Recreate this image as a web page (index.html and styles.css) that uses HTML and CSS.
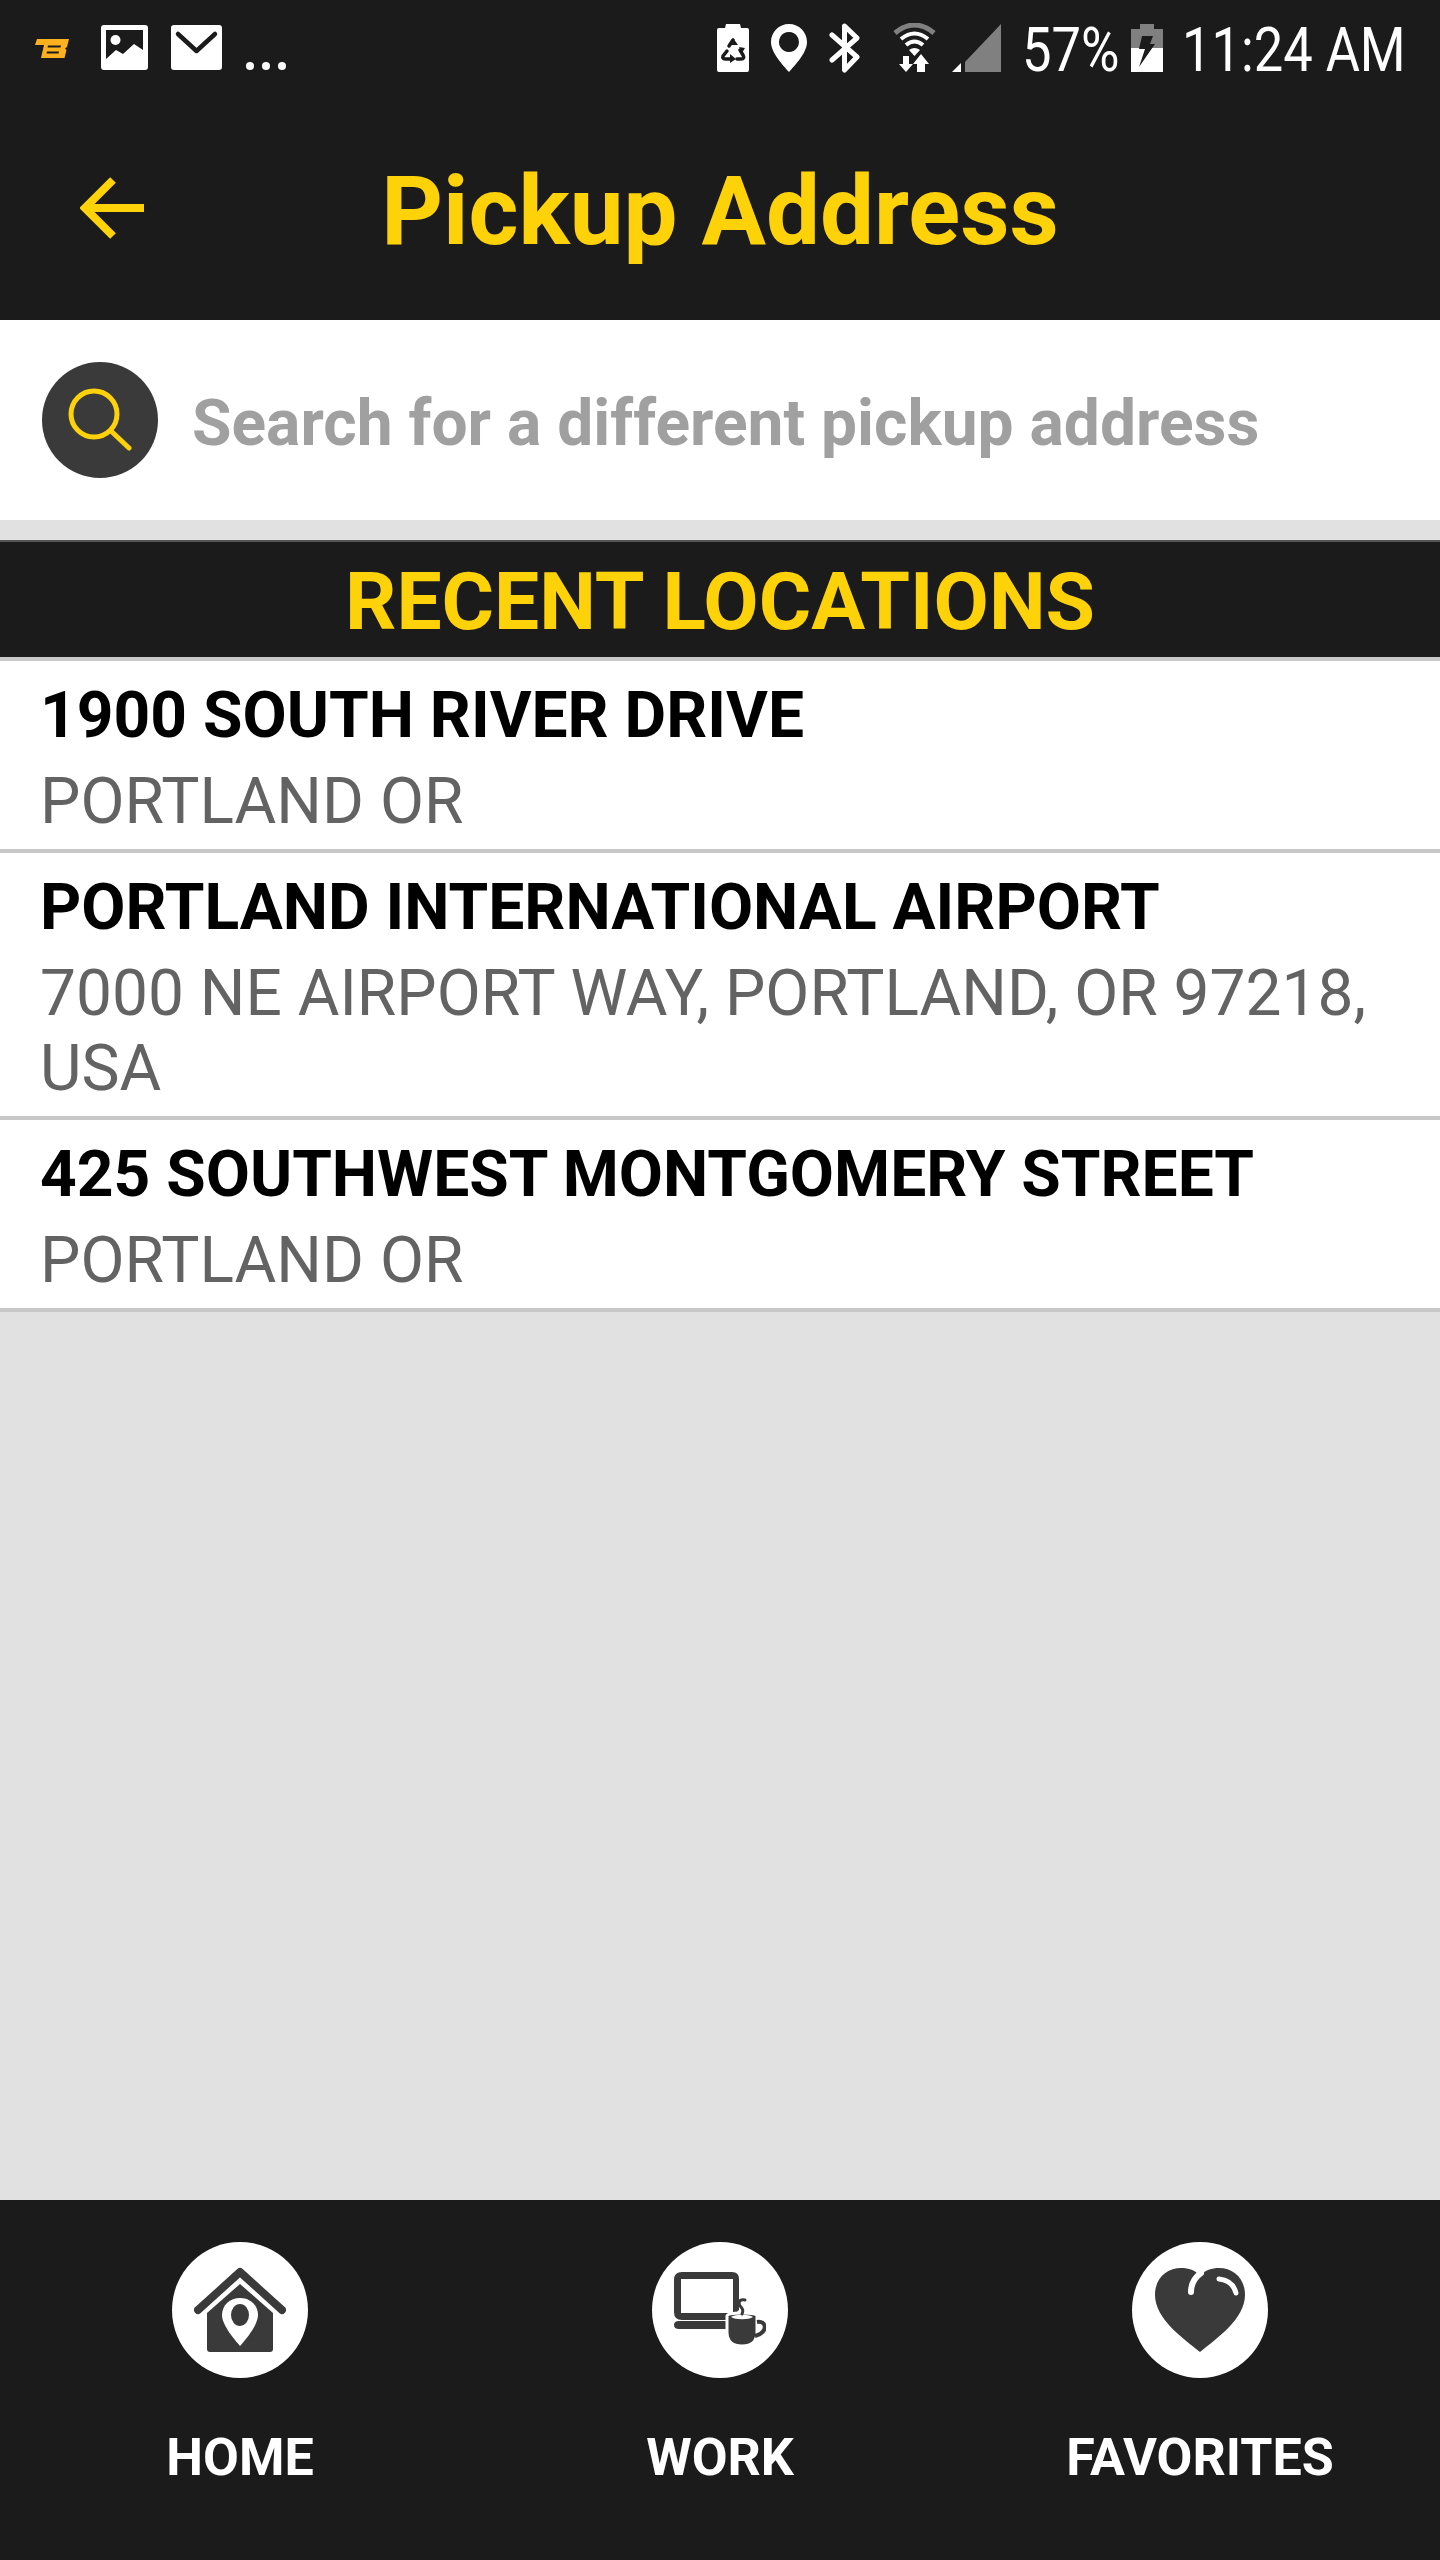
FILE: index.html
```html
<!DOCTYPE html>
<html lang="en">

<head>
    <meta charset="UTF-8">
    <meta name="viewport" content="width=device-width, initial-scale=1.0">
    <title>Pickup Address</title>
    <link rel="stylesheet" href="styles.css">
</head>

<body>
    <div class="app">
        <div class="status-bar">
            <div class="status-left">
                <svg class="ic-brand" viewBox="0 0 34 19">
                    <path d="M2 0H34L32 8L30 9.500L31.500 11L29.500 19H6L9 6H0Z" fill="#fbb01f" />
                    <path d="M13 6.500H26L25.500 8.500H12.500ZM12 12.500H24L23.500 14.500H11.500Z" fill="#1b1b1b" />
                </svg>
                <svg class="ic-picture" viewBox="0 0 47 45">
                    <rect width="47" height="45" rx="3" fill="#fff" />
                    <path d="M5 5H42V25L33 19L22 29L15 25L5 34Z" fill="#1b1b1b" />
                    <circle cx="14.500" cy="15" r="5" fill="#fff" />
                </svg>
                <svg class="ic-mail" viewBox="0 0 51 45">
                    <rect width="51" height="45" rx="3" fill="#fff" />
                    <path d="M7 9L25.500 26L44 9" fill="none" stroke="#1b1b1b" stroke-width="4.500" stroke-linecap="round" stroke-linejoin="round" />
                </svg>
                <div class="more-dots"><span></span><span></span><span></span></div>
            </div>
            <div class="status-right">
                <svg class="ic-battery-saver" viewBox="0 0 32 48">
                    <path d="M9 0H23L24 4H30Q32 4 32 6V46Q32 48 30 48H2Q0 48 0 46V6Q0 4 2 4H8Z" fill="#fff" />
                    <path d="M16 16L12 22M10 27L6 32Q5 35 9 35H13M20 35H24Q28 35 26 31L23 26" fill="none" stroke="#1b1b1b" stroke-width="3.500" stroke-linecap="round" />
                    <path d="M16 14L11 21H21ZM13 30V39L19 35ZM22 23L28 24L25 29Z" fill="#1b1b1b" />
                </svg>
                <svg class="ic-pin" viewBox="0 0 36 48">
                    <path fill-rule="evenodd" d="M18 0C8 0 0 8 0 18C0 29 12 41 18 48C24 41 36 29 36 18C36 8 28 0 18 0ZM18 8A10 10 0 1 1 17.900 8Z" fill="#fff" />
                </svg>
                <svg class="ic-bluetooth" viewBox="0 0 31 50">
                    <path d="M3 12L28 34L15.500 47V3L28 15L3 37" fill="none" stroke="#fff" stroke-width="5" stroke-linecap="round" stroke-linejoin="round" />
                </svg>
                <svg class="ic-wifi" viewBox="0 0 43 49">
                    <path d="M2 10Q21.500 -6 41 10" fill="none" stroke="#808080" stroke-width="5" />
                    <path d="M8 16Q21.500 5 35 16M13 22Q21.500 15 30 22" fill="none" stroke="#fff" stroke-width="4" />
                    <path d="M16 27Q21.500 23 27 27L21.500 33Z" fill="#fff" />
                    <path d="M10 33H16V41H20L13 49L6 41H10ZM24 49V41H20L28 31L36 41H32V49Z" fill="#fff" />
                </svg>
                <svg class="ic-signal" viewBox="0 0 49 48">
                    <path d="M13 38L49 0V48H13Z" fill="#808080" />
                    <path d="M0 48L9 39V48Z" fill="#fff" />
                </svg>
                <span class="battery-pct"><span class="narrow-text">57%</span></span>
                <svg class="ic-charging" viewBox="0 0 32 48">
                    <path d="M9 0H23V5H32V24H0V5H9Z" fill="#808080" />
                    <path d="M0 24H32V48H0Z" fill="#fff" />
                    <path d="M11 12H22L19 20H24L8 43L14 25H8Z" fill="#1b1b1b" />
                </svg>
                <span class="clock"><span class="narrow-text">11:24 AM</span></span>
            </div>
        </div>

        <div class="header">
            <svg class="back-arrow" viewBox="0 0 66 62">
                <path d="M64 31H8M33 3L5 31L33 59" fill="none" stroke="#fed208" stroke-width="8" />
            </svg>
            <h1 class="page-title">Pickup Address</h1>
        </div>

        <div class="search-row">
            <div class="search-circle">
                <svg class="search-icon" viewBox="0 0 64 64">
                    <circle cx="26" cy="26" r="23" fill="none" stroke="#fed208" stroke-width="5" />
                    <path d="M43 43L61 60" fill="none" stroke="#fed208" stroke-width="5" stroke-linecap="round" />
                </svg>
            </div>
            <span class="search-placeholder">Search for a different pickup address</span>
        </div>

        <div class="section-title">RECENT LOCATIONS</div>

        <div class="location">
            <div class="location-name">1900 SOUTH RIVER DRIVE</div>
            <div class="location-detail">PORTLAND OR</div>
        </div>
        <div class="location">
            <div class="location-name">PORTLAND INTERNATIONAL AIRPORT</div>
            <div class="location-detail">7000 NE AIRPORT WAY, PORTLAND, OR 97218, USA</div>
        </div>
        <div class="location">
            <div class="location-name">425 SOUTHWEST MONTGOMERY STREET</div>
            <div class="location-detail">PORTLAND OR</div>
        </div>

        <div class="spacer"></div>

        <div class="bottom-nav">
            <div class="nav-item">
                <div class="nav-circle">
                    <svg class="nav-icon" viewBox="0 0 92 86">
                        <path d="M4 43L46 5L88 43" fill="none" stroke="#3a3a3a" stroke-width="8" stroke-linecap="round" stroke-linejoin="round" />
                        <path d="M46 17L79 46V82Q79 85 76 85H16Q13 85 13 82V46Z" fill="#3a3a3a" />
                        <path d="M46 31C36 31 28 38 28 48C28 58 40 72 46 79C52 72 64 58 64 48C64 38 56 31 46 31Z" fill="#fff" />
                        <ellipse cx="46" cy="48" rx="9" ry="11" fill="#3a3a3a" />
                    </svg>
                </div>
                <span class="nav-label">HOME</span>
            </div>
            <div class="nav-item">
                <div class="nav-circle">
                    <svg class="nav-icon" viewBox="0 0 92 76">
                        <path fill-rule="evenodd" d="M8 0H58Q65 0 65 7V38L54 48H8Q0 48 0 40V8Q0 0 8 0ZM7 7V41H59V7Z" fill="#3a3a3a" />
                        <path d="M5 49H52V57H5Q0 57 0 53Q0 49 5 49Z" fill="#3a3a3a" />
                        <path d="M53 44Q53 41 68 41Q83 41 83 44V60Q83 74 68 74Q53 74 53 60Z" fill="#3a3a3a" stroke="#fff" stroke-width="3" />
                        <path d="M57 45C61 42 75 42 79 45C75 48 61 48 57 45Z" fill="#fff" />
                        <path d="M83 50C90 49 92 54 90 58C88 62 85 63 81 64" fill="none" stroke="#3a3a3a" stroke-width="4" />
                        <path d="M71 28C64 27 64 32 67 35C69 37 69 40 68 42" fill="none" stroke="#3a3a3a" stroke-width="3" stroke-linecap="round" />
                    </svg>
                </div>
                <span class="nav-label">WORK</span>
            </div>
            <div class="nav-item">
                <div class="nav-circle">
                    <svg class="nav-icon" viewBox="0 0 92 86">
                        <path d="M46 85C30 72 1 52 1 28C1 10 14 1 27 1C35 1 41 3 46 9C51 3 58 1 65 1C79 1 91 11 91 28C91 52 62 72 46 85Z" fill="#3a3a3a" />
                        <path d="M37 25C37 18 40 11 47 6" fill="none" stroke="#fff" stroke-width="6" stroke-linecap="round" />
                        <path d="M65 12C74 13 80 18 82 26" fill="none" stroke="#fff" stroke-width="5" stroke-linecap="round" />
                    </svg>
                </div>
                <span class="nav-label">FAVORITES</span>
            </div>
        </div>
    </div>
</body>

</html>
```

FILE: styles.css
```css
* {
    box-sizing: border-box;
}

body {
    margin: 0;
    font-family: Roboto, "Liberation Sans", sans-serif;
    background-color: #e1e1e1;
}

.app {
    display: flex;
    flex-direction: column;
    width: 1440px;
    height: 2560px;
}

/* status bar */
.status-bar {
    display: flex;
    justify-content: space-between;
    align-items: flex-start;
    height: 100px;
    padding: 0 36px 0 35px;
    background-color: #1b1b1b;
    color: #fff;
}

.status-left,
.status-right {
    display: flex;
    align-items: flex-start;
}

.ic-brand {
    width: 34px;
    height: 19px;
    margin-top: 39px;
}

.ic-picture {
    width: 47px;
    height: 45px;
    margin: 25px 0 0 32px;
}

.ic-mail {
    width: 51px;
    height: 45px;
    margin: 25px 0 0 23px;
}

.more-dots {
    display: flex;
    gap: 8px;
    margin: 62px 0 0 24px;
}

.more-dots span {
    width: 8px;
    height: 8px;
    border-radius: 50%;
    background-color: #fff;
}

.ic-battery-saver {
    width: 32px;
    height: 48px;
    margin-top: 24px;
}

.ic-pin {
    width: 36px;
    height: 48px;
    margin: 24px 0 0 22px;
}

.ic-bluetooth {
    width: 31px;
    height: 50px;
    margin: 23px 0 0 22px;
}

.ic-wifi {
    width: 43px;
    height: 49px;
    margin: 23px 0 0 33px;
}

.ic-signal {
    width: 49px;
    height: 48px;
    margin: 24px 0 0 16px;
}

.battery-pct,
.clock {
    font-size: 61px;
    line-height: 100px;
    white-space: nowrap;
}

/* status font is narrower than Roboto, squeeze it */
.narrow-text {
    display: inline-block;
    transform: scaleX(0.86);
    transform-origin: left center;
}

.battery-pct {
    width: 95px;
    margin-left: 21px;
}

.ic-charging {
    width: 32px;
    height: 48px;
    margin: 24px 0 0 14px;
}

.clock {
    width: 222px;
    margin-left: 19px;
}

/* header */
.header {
    position: relative;
    height: 220px;
    background-color: #1b1b1b;
}

.back-arrow {
    position: absolute;
    left: 80px;
    top: 77px;
    width: 66px;
    height: 62px;
}

.page-title {
    margin: 0;
    padding-top: 61px;
    font-size: 96px;
    line-height: 100px;
    font-weight: 700;
    text-align: center;
    color: #fed208;
}

/* search */
.search-row {
    display: flex;
    align-items: center;
    gap: 34px;
    height: 200px;
    padding-left: 42px;
    background-color: #fff;
}

.search-circle {
    display: flex;
    align-items: center;
    justify-content: center;
    width: 116px;
    height: 116px;
    border-radius: 50%;
    background-color: #3a3a3a;
}

.search-icon {
    width: 64px;
    height: 64px;
}

.search-placeholder {
    padding-top: 6px;
    font-size: 64.100px;
    font-weight: 700;
    color: #a0a0a0;
}

/* list */
.section-title {
    height: 121px;
    margin-top: 20px;
    border-top: 2px solid #555;
    border-bottom: 4px solid #c8c8c8;
    background-color: #1b1b1b;
    color: #fed208;
    font-size: 80.300px;
    font-weight: 700;
    line-height: 121px;
    text-align: center;
}

.location {
    padding: 12px 40px 10px;
    border-bottom: 4px solid #c8c8c8;
    background-color: #fff;
}

.location-name {
    font-size: 64.100px;
    font-weight: 700;
    line-height: 85px;
    color: #000;
}

.location-detail {
    padding-top: 6px;
    font-size: 64px;
    line-height: 75px;
    color: #636363;
}

.spacer {
    flex-grow: 1;
}

/* bottom nav */
.bottom-nav {
    display: flex;
    height: 360px;
    background-color: #1b1b1b;
}

.nav-item {
    display: flex;
    flex: 1;
    flex-direction: column;
    align-items: center;
    padding-top: 42px;
}

.nav-circle {
    display: flex;
    align-items: center;
    justify-content: center;
    width: 136px;
    height: 136px;
    border-radius: 50%;
    background-color: #fff;
}

.nav-icon {
    width: 92px;
}

.nav-label {
    margin-top: 45px;
    font-size: 52px;
    font-weight: 700;
    line-height: 70px;
    color: #fff;
}
```
